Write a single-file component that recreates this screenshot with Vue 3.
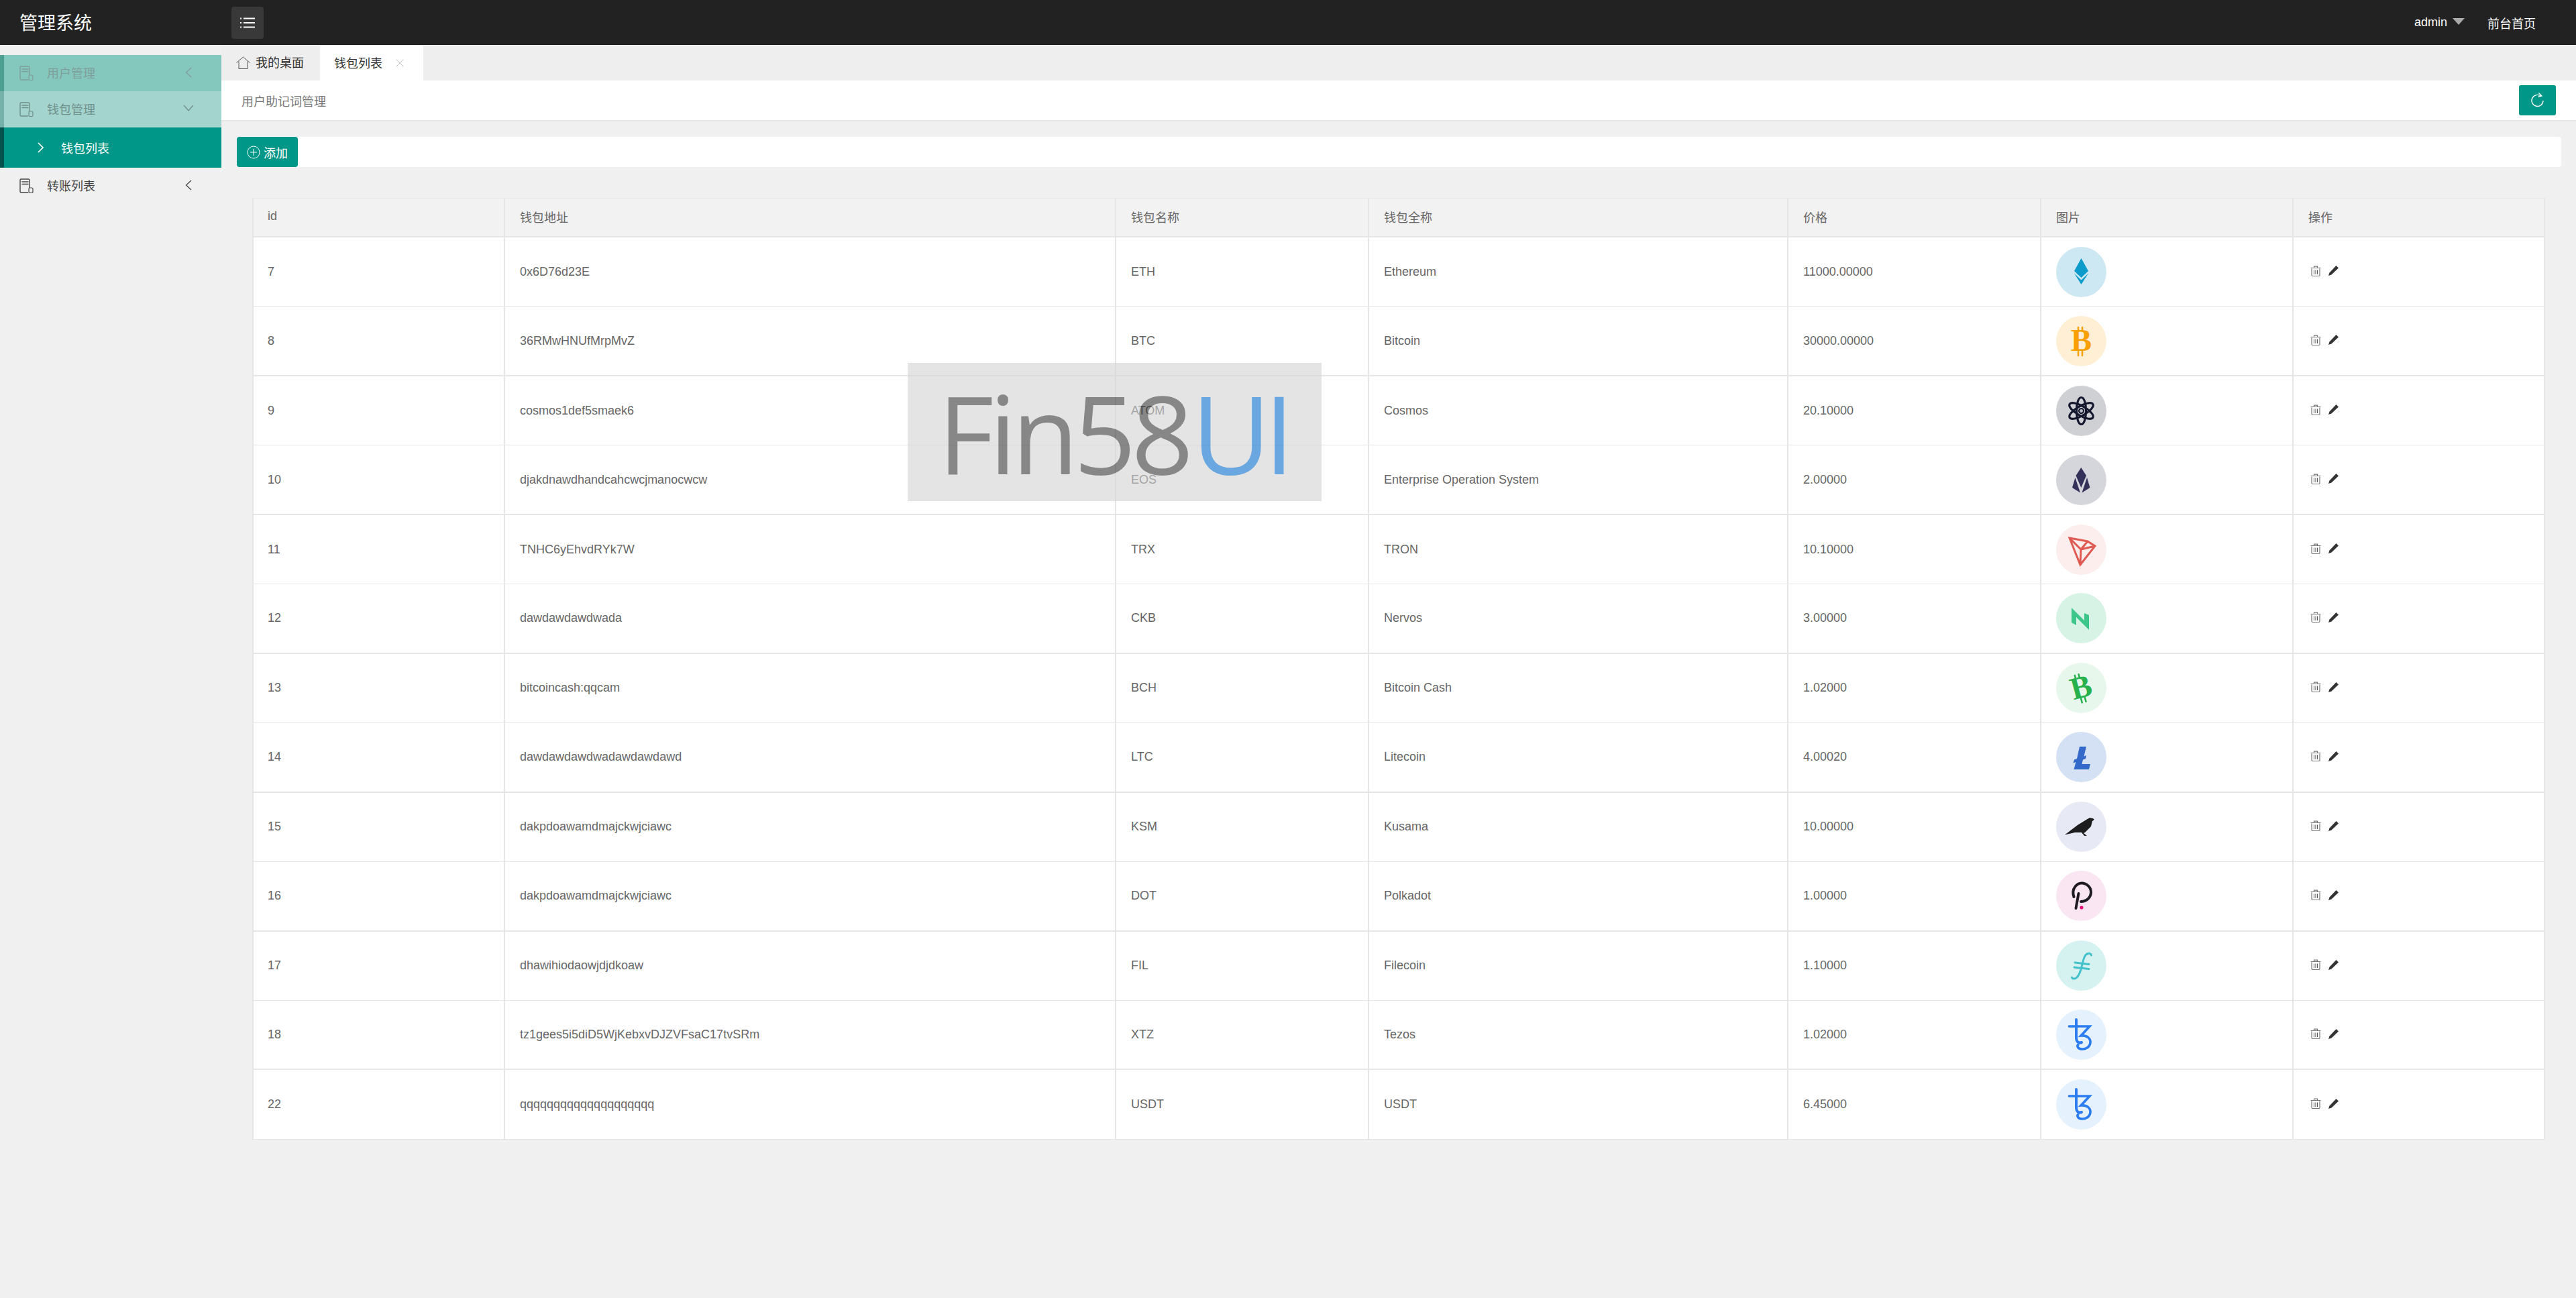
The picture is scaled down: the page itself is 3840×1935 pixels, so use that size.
<template>
  <div class="page">
    <header class="topbar">
      <div class="logo">管理系统</div>
      <button class="menu-btn">
        <svg width="22" height="16" viewBox="0 0 22 16">
          <path d="M0 1.500h2M5 1.500h17M0 8h2M5 8h17M0 14.500h2M5 14.500h17" stroke="#fff" stroke-width="2" fill="none" />
        </svg>
      </button>
      <div class="top-right">
        <span class="user">admin<i class="caret"></i></span>
        <span class="front">前台首页</span>
      </div>
    </header>

    <div class="body">
      <aside class="sidebar">
        <div class="nav-row nav-faded">
          <svg class="doc-icon" viewBox="0 0 21 22"><path d="M15 14V2.500A1.500 1.500 0 0 0 13.500 1H2.500A1.500 1.500 0 0 0 1 2.500v17A1.500 1.500 0 0 0 2.500 21H13M3.500 5h10M3.500 8.500h10" fill="none" stroke="currentColor" stroke-width="1.400" /><rect x="14" y="14" width="6" height="7.500" rx="1.500" fill="none" stroke="currentColor" stroke-width="1.200" /></svg>
          <span class="cjk-nudge">用户管理</span>
          <svg class="chev" viewBox="0 0 10 16"><path d="M9 1L1.500 8 9 15" fill="none" stroke="currentColor" stroke-width="1.300" /></svg>
        </div>
        <div class="nav-row nav-open">
          <svg class="doc-icon" viewBox="0 0 21 22"><path d="M15 14V2.500A1.500 1.500 0 0 0 13.500 1H2.500A1.500 1.500 0 0 0 1 2.500v17A1.500 1.500 0 0 0 2.500 21H13M3.500 5h10M3.500 8.500h10" fill="none" stroke="currentColor" stroke-width="1.400" /><rect x="14" y="14" width="6" height="7.500" rx="1.500" fill="none" stroke="currentColor" stroke-width="1.200" /></svg>
          <span class="cjk-nudge">钱包管理</span>
          <svg class="chev-down" viewBox="0 0 16 10"><path d="M1 1l7 8 7-8" fill="none" stroke="currentColor" stroke-width="1.300" /></svg>
        </div>
        <div class="nav-sub">
          <svg class="chev-right" viewBox="0 0 9 16"><path d="M1 1l7 7-7 7" fill="none" stroke="currentColor" stroke-width="1.600" /></svg>
          <span>钱包列表</span>
        </div>
        <div class="nav-row">
          <svg class="doc-icon" viewBox="0 0 21 22"><path d="M15 14V2.500A1.500 1.500 0 0 0 13.500 1H2.500A1.500 1.500 0 0 0 1 2.500v17A1.500 1.500 0 0 0 2.500 21H13M3.500 5h10M3.500 8.500h10" fill="none" stroke="currentColor" stroke-width="1.400" /><rect x="14" y="14" width="6" height="7.500" rx="1.500" fill="none" stroke="currentColor" stroke-width="1.200" /></svg>
          <span class="cjk-nudge">转账列表</span>
          <svg class="chev" viewBox="0 0 10 16"><path d="M9 1L1.500 8 9 15" fill="none" stroke="currentColor" stroke-width="1.300" /></svg>
        </div>
      </aside>

      <main class="main">
        <div class="tabs">
          <div class="tab">
            <svg width="21" height="19" viewBox="0 0 21 19"><path d="M.500 9.500L10.500 1l10 8.500M4 7.500V18.500h13V7.500" fill="none" stroke="#555" stroke-width="1" /></svg>
            <span class="cjk-nudge">我的桌面</span>
          </div>
          <div class="tab tab-active">
            <span class="cjk-nudge">钱包列表</span>
            <svg class="tab-close" width="12" height="12" viewBox="0 0 12 12"><path d="M.500.500l11 11M11.500.500l-11 11" stroke="#c8c8c8" stroke-width="1" /></svg>
          </div>
        </div>

        <div class="title-bar">
          <span>用户助记词管理</span>
          <button class="refresh">
            <svg width="22" height="24" viewBox="0 0 22 24"><path d="M16 6.500A8.500 8.500 0 1 0 19 13" fill="none" stroke="#fff" stroke-width="1.300" /><path d="M12.500 1.500L17 6l-5.500 1.500" fill="none" stroke="#fff" stroke-width="1.300" /></svg>
          </button>
        </div>

        <div class="toolbar">
          <button class="add-btn">
            <svg width="20" height="20" viewBox="0 0 20 20"><circle cx="10" cy="10" r="9" fill="none" stroke="#fff" stroke-width="1" /><path d="M10 5v10M5 10h10" stroke="#fff" stroke-width="1" /></svg>
            添加
          </button>
        </div>

        <table class="grid">
          <colgroup>
            <col v-for="w in colWidths" :key="w.name" :style="{ width: w.px + 'px' }" />
          </colgroup>
          <thead>
            <tr>
              <th v-for="w in colWidths" :key="w.name">{{ w.name }}</th>
            </tr>
          </thead>
          <tbody>
            <tr v-for="c in coins" :key="c.id">
              <td>{{ c.id }}</td>
              <td>{{ c.address }}</td>
              <td>{{ c.symbol }}</td>
              <td>{{ c.fullName }}</td>
              <td>{{ c.price }}</td>
              <td>
                <svg class="coin" viewBox="0 0 75 75">
                  <circle cx="37.500" cy="37.500" r="37.500" :fill="c.bg" />
                  <path
                    v-for="(p, i) in c.paths"
                    :key="i"
                    :d="p.d"
                    :fill="p.fill || 'none'"
                    :stroke="p.stroke || 'none'"
                    :stroke-width="p.sw || 0"
                    :transform="p.tf"
                    stroke-linecap="round"
                  />
                  <text
                    v-if="c.glyph"
                    class="coin-glyph"
                    x="37.500"
                    y="52"
                    text-anchor="middle"
                    :fill="c.color"
                    :transform="c.glyphTf"
                  >B</text>
                </svg>
              </td>
              <td>
                <div class="ops">
                  <svg width="16" height="16" viewBox="0 0 16 16"><path d="M.500 3.500h15M5.500 3V1.200h5V3" fill="none" stroke="#777" stroke-width="1.200" /><path d="M2 4.500V14a1.500 1.500 0 0 0 1.500 1.500h9A1.500 1.500 0 0 0 14 14V4.500" fill="none" stroke="#777" stroke-width="1.200" /><path d="M5.500 6.500v6.500M8 6.500v6.500M10.500 6.500v6.500" stroke="#555" stroke-width="1" /></svg>
                  <svg width="15" height="15" viewBox="0 0 15 15"><path d="M11.500 0L15 3.500 4.500 13.500 0 15l1.500-4.500z" fill="#333" /></svg>
                </div>
              </td>
            </tr>
          </tbody>
        </table>
      </main>
    </div>

    <div class="watermark"><span>Fin58</span><span class="wm-ui">UI</span></div>
  </div>
</template>

<script setup>
const colWidths = [
  { name: 'id', px: 377 },
  { name: '钱包地址', px: 911 },
  { name: '钱包名称', px: 377 },
  { name: '钱包全称', px: 625 },
  { name: '价格', px: 377 },
  { name: '图片', px: 376 },
  { name: '操作', px: 375 }
]

const tezos = [
  { d: 'M19.500 25H50L37 39C46 38 51.500 43 51 49C50.500 56 44 59.500 38 59C32.500 58.500 30.500 54.500 33 52', stroke: '#2c7df0', sw: 3.600 },
  { d: 'M30 15V41C30 48 33 50.500 38 49', stroke: '#2c7df0', sw: 4 }
]

const atomRing = 'M37.500 17.500C42 17.500 44.500 27 44.500 37.500S42 57.500 37.500 57.500 30.500 48 30.500 37.500 33 17.500 37.500 17.500z'

const coins = [
  {
    id: 7, address: '0x6D76d23E', symbol: 'ETH', fullName: 'Ethereum', price: '11000.00000', bg: '#cde8f2',
    paths: [
      { d: 'M37.500 17L48 36 37.500 46 27 36z', fill: '#0c9bca' },
      { d: 'M27 39.500L37.500 49.500 48 39.500 37.500 56z', fill: '#0c9bca' }
    ]
  },
  {
    id: 8, address: '36RMwHNUfMrpMvZ', symbol: 'BTC', fullName: 'Bitcoin', price: '30000.00000', bg: '#feefd5',
    glyph: true, color: '#f7a000',
    paths: [{ d: 'M33 17v5M39 17v5M33 53v6M39 53v6', stroke: '#f7a000', sw: 2.500 }]
  },
  {
    id: 9, address: 'cosmos1def5smaek6', symbol: 'ATOM', fullName: 'Cosmos', price: '20.10000', bg: '#cfd0d4',
    paths: [
      { d: atomRing, stroke: '#14182f', sw: 3.200 },
      { d: atomRing, stroke: '#14182f', sw: 3.200, tf: 'rotate(60 37.500 37.500)' },
      { d: atomRing, stroke: '#14182f', sw: 3.200, tf: 'rotate(120 37.500 37.500)' },
      { d: 'M37.500 33a4.500 4.500 0 1 0 .01 0z', fill: '#14182f' },
      { d: 'M37.500 35a2.500 2.500 0 1 0 .01 0z', fill: '#b9bac4' }
    ]
  },
  {
    id: 10, address: 'djakdnawdhandcahcwcjmanocwcw', symbol: 'EOS', fullName: 'Enterprise Operation System', price: '2.00000', bg: '#d5d5dc',
    paths: [
      { d: 'M37.300 19L45 31 37.300 49 29.500 31z', fill: '#33305a' },
      { d: 'M28.500 34L24 49 36 56.500z', fill: '#33305a' },
      { d: 'M46 34L50.500 49 38.500 56.500z', fill: '#33305a' }
    ]
  },
  {
    id: 11, address: 'TNHC6yEhvdRYk7W', symbol: 'TRX', fullName: 'TRON', price: '10.10000', bg: '#fdeeee',
    paths: [
      { d: 'M20 20L47 25 58 32 36 60zM20 20L37 37 58 32M37 37L36 60M47 25L37 37', stroke: '#df5a52', sw: 3 }
    ]
  },
  {
    id: 12, address: 'dawdawdawdwada', symbol: 'CKB', fullName: 'Nervos', price: '3.00000', bg: '#d6f3e6',
    paths: [{ d: 'M23 22L42 41V30L49 33V55L30 36V48L23 44z', fill: '#3cc68a' }]
  },
  {
    id: 13, address: 'bitcoincash:qqcam', symbol: 'BCH', fullName: 'Bitcoin Cash', price: '1.02000', bg: '#e7f7ec',
    glyph: true, color: '#26b14c', glyphTf: 'rotate(-15 37.500 37.500)',
    paths: [{ d: 'M33 17v5M39 17v5M33 53v6M39 53v6', stroke: '#26b14c', sw: 2.500, tf: 'rotate(-15 37.500 37.500)' }]
  },
  {
    id: 14, address: 'dawdawdawdwadawdawdawd', symbol: 'LTC', fullName: 'Litecoin', price: '4.00020', bg: '#d4e0f3',
    paths: [{ d: 'M35 22H45L41.500 36.500 45 35 44 40 40 41.500 38.500 48H51L49 56H26.500L29.500 45 25.500 46.500 27 41.500 31 40z', fill: '#3469c9' }]
  },
  {
    id: 15, address: 'dakpdoawamdmajckwjciawc', symbol: 'KSM', fullName: 'Kusama', price: '10.00000', bg: '#e7e9f4',
    paths: [{ d: 'M13 49.500L32 35 45 27 50 24 55 25 57 27 54 29 52 37 43 46 41 47 46 51 42 51 38 46 28 46z', fill: '#1d1d1f' }]
  },
  {
    id: 16, address: 'dakpdoawamdmajckwjciawc', symbol: 'DOT', fullName: 'Polkadot', price: '1.00000', bg: '#fae6f2',
    paths: [
      { d: 'M26.500 39C22 26 32 18.500 38 18.500C46 18.500 52 25 52 32C52 40 45 46 37 46', stroke: '#1e1b24', sw: 4 },
      { d: 'M33.500 34L29.500 56', stroke: '#1e1b24', sw: 4 },
      { d: 'M38 52.400a2.600 2.600 0 1 0 .01 0z', fill: '#e6007a' }
    ]
  },
  {
    id: 17, address: 'dhawihiodaowjdjdkoaw', symbol: 'FIL', fullName: 'Filecoin', price: '1.10000', bg: '#d5f2f1',
    paths: [
      { d: 'M52.500 22C51 18 45 18.500 42.500 24C38 34 38 49 31 55C28 58 24 57.500 23.500 55', stroke: '#42c1ca', sw: 3 },
      { d: 'M28 33L49 35.500M27 40L49 42.500', stroke: '#42c1ca', sw: 3 }
    ]
  },
  {
    id: 18, address: 'tz1gees5i5diD5WjKebxvDJZVFsaC17tvSRm', symbol: 'XTZ', fullName: 'Tezos', price: '1.02000', bg: '#e6f1fe', paths: tezos
  },
  {
    id: 22, address: 'qqqqqqqqqqqqqqqqqqqq', symbol: 'USDT', fullName: 'USDT', price: '6.45000', bg: '#e6f1fe', paths: tezos
  }
]
</script>

<style>
html, body {
  margin: 0;
  background: #f0f0f0;
}
</style>

<style scoped>
.page {
  position: relative;
  height: 1935px;
  overflow: hidden;
  background: #f0f0f0;
  color: #666;
  font-family: "Liberation Sans", "Noto Sans CJK SC", sans-serif;
  font-size: 18px;
}

.topbar {
  height: 67px;
  background: #222;
  color: #fff;
  display: flex;
  align-items: center;
}

.logo {
  width: 345px;
  padding-left: 29px;
  padding-bottom: 3px;
  box-sizing: border-box;
  font-size: 27px;
}

.menu-btn {
  width: 48px;
  height: 48px;
  border: 0;
  border-radius: 4px;
  background: #393939;
  display: flex;
  align-items: center;
  justify-content: center;
  padding: 0;
}

.top-right {
  margin-left: auto;
  padding-right: 60px;
  display: flex;
  align-items: center;
  gap: 34px;
}

.user {
  display: flex;
  align-items: center;
  gap: 8px;
}

.caret {
  width: 0;
  height: 0;
  border-left: 9px solid transparent;
  border-right: 9px solid transparent;
  border-top: 10px solid #aaa;
  margin-top: -3px;
}

.body {
  display: flex;
  height: 1868px;
}

.sidebar {
  width: 330px;
  flex: none;
  padding-top: 15px;
  box-sizing: border-box;
}

.nav-row {
  height: 54px;
  padding-left: 29px;
  padding-right: 44px;
  display: flex;
  align-items: center;
  color: #444;
}

.nav-row span {
  margin-left: 20px;
}

.cjk-nudge {
  padding-bottom: 3px;
}

.nav-faded {
  background: #84c7bd;
  border-left: 6px solid #4f9e92;
  padding-left: 23px;
  color: #7f9f9a;
}

.nav-open {
  background: #a3d4cd;
  border-left: 6px solid #75b1a9;
  padding-left: 23px;
  color: #6f8f8a;
}

.doc-icon {
  width: 21px;
  height: 22px;
  flex: none;
}

.chev {
  width: 10px;
  height: 16px;
  margin-left: auto;
  margin-top: -3px;
}

.chev-down {
  width: 16px;
  height: 10px;
  margin-left: auto;
  margin-right: -3px;
  margin-top: -4px;
}

.nav-sub {
  height: 60px;
  background: #009688;
  border-left: 6px solid #00564e;
  padding-left: 50px;
  display: flex;
  align-items: center;
  color: #fff;
}

.nav-sub span {
  margin-left: 26px;
}

.chev-right {
  width: 9px;
  height: 16px;
}

.main {
  flex: 1;
  min-width: 0;
}

.tabs {
  height: 53px;
  background: #eeeeef;
  display: flex;
  color: #333;
}

.tab {
  width: 147px;
  box-sizing: border-box;
  display: flex;
  align-items: center;
  gap: 8px;
  padding-left: 22px;
}

.tab-active {
  width: 154px;
  background: #fff;
  margin-top: 1px;
  border-radius: 3px 3px 0 0;
  padding-left: 21px;
  gap: 20px;
}

.tab-close {
  flex: none;
}

.title-bar {
  height: 59px;
  background: #fff;
  border-bottom: 2px solid #e6e6e6;
  padding-left: 30px;
  padding-right: 30px;
  display: flex;
  align-items: center;
  justify-content: space-between;
  color: #777;
}

.refresh {
  width: 55px;
  height: 45px;
  margin-top: -1px;
  border: 0;
  border-radius: 3px;
  background: #009688;
  padding: 0;
  display: flex;
  align-items: center;
  justify-content: center;
}

.toolbar {
  height: 45px;
  margin: 23px 22px 0 23px;
  background: #fff;
  border-radius: 4px;
  display: flex;
}

.add-btn {
  width: 91px;
  border: 0;
  border-radius: 4px;
  background: #009688;
  color: #fff;
  font: inherit;
  padding: 0 0 0 15px;
  display: flex;
  align-items: center;
  gap: 5px;
}

.grid {
  margin: 46px 0 0 46px;
  width: 3418px;
  table-layout: fixed;
  border-collapse: separate;
  border-spacing: 0;
  background: #fff;
}

.grid th {
  height: 59px;
  box-sizing: border-box;
  background: #f2f2f2;
  font-weight: 400;
  text-align: left;
  padding: 0 0 3px 22px;
  border-top: 1px solid #e6e6e6;
  border-right: 2px solid #e6e6e6;
  border-bottom: 2px solid #e6e6e6;
}

.grid th:first-child,
.grid td:first-child {
  border-left: 2px solid #e6e6e6;
  padding-left: 21px;
}

.grid td {
  height: 103.460px;
  box-sizing: border-box;
  padding: 0 0 0 22px;
  border-right: 2px solid #e6e6e6;
  border-bottom: 1px solid #e6e6e6;
}

.grid tr:nth-child(even) td {
  border-bottom-width: 2px;
}

.coin {
  display: block;
  width: 75px;
  height: 75px;
}

.coin-glyph {
  font-family: "Liberation Serif", serif;
  font-weight: 700;
  font-size: 47px;
}

.ops {
  display: flex;
  align-items: center;
  gap: 11px;
  padding-left: 3px;
  margin-top: -3px;
}

.watermark {
  position: absolute;
  left: 1353px;
  top: 541px;
  width: 617px;
  height: 206px;
  box-sizing: border-box;
  padding-left: 45px;
  background: #d2d2d2;
  opacity: 0.58;
  color: #323232;
  font-family: "Open Sans", sans-serif;
  font-size: 162px;
  font-weight: 500;
  line-height: 206px;
  letter-spacing: -7px;
  white-space: nowrap;
}

.wm-ui {
  color: #0069ca;
  letter-spacing: -10px;
  margin-left: 4px;
}
</style>
